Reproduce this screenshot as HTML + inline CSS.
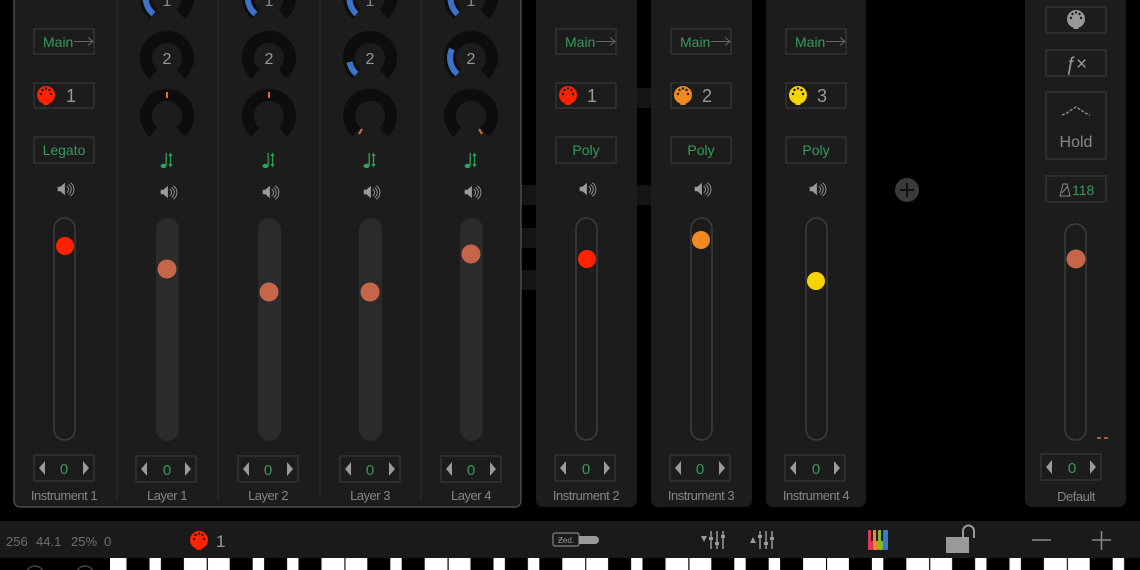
<!DOCTYPE html>
<html><head><meta charset="utf-8"><style>
html,body{margin:0;padding:0;background:#000;width:1140px;height:570px;overflow:hidden}
svg{display:block}
text{font-family:"Liberation Sans",sans-serif}
</style></head><body>
<svg width="1140" height="570" viewBox="0 0 1140 570" xmlns="http://www.w3.org/2000/svg">
<defs>
<g id="ring"><path d="M-13.5,16 A21,21 0 1 1 13.5,16" fill="none" stroke="#0d0d0d" stroke-width="12"/></g>
<g id="spk" fill="#9a9a9a" transform="scale(0.9)"><path d="M-7,-2.5 h3 l5,-4.5 v14 l-5,-4.5 h-3z"/><path d="M3,-3 a4,4 0 0 1 0,7" fill="none" stroke="#9a9a9a" stroke-width="1"/><path d="M5,-5 a6.5,6.5 0 0 1 0,11" fill="none" stroke="#9a9a9a" stroke-width="1"/><path d="M7,-7 a9,9 0 0 1 0,15" fill="none" stroke="#9a9a9a" stroke-width="1"/></g>
<g id="midi"><circle r="9"/><rect x="-2.5" y="6" width="5" height="4"/><g fill="#1b1b1b"><circle cx="-5" cy="-1" r="1.2"/><circle cx="-3.5" cy="-5" r="1.2"/><circle cx="0" cy="-6.5" r="1.2"/><circle cx="3.5" cy="-5" r="1.2"/><circle cx="5" cy="-1" r="1.2"/></g></g>
<g id="note" fill="#2fa356" stroke="#2fa356"><ellipse cx="-3.5" cy="6" rx="3" ry="2.2" stroke="none"/><line x1="-0.8" y1="6" x2="-0.8" y2="-7" stroke-width="1.3"/><line x1="3.5" y1="-6" x2="3.5" y2="6" stroke-width="1.3"/><path d="M1.5,-4 L3.5,-7.5 L5.5,-4z M1.5,4 L3.5,7.5 L5.5,4z" stroke="none"/></g>
<g id="val"><rect x="-30" y="-13" width="60" height="26" fill="none" stroke="#333" stroke-width="1.5"/><path d="M-19,-7 v14 l-6,-7z M19,-7 v14 l6,-7z" fill="#9a9a9a"/></g>
<pattern id="keys" patternUnits="userSpaceOnUse" x="103.6" y="558" width="240.8" height="12">
<rect width="240.8" height="12" fill="#fff"/>
<g stroke="#000" stroke-width="1.2"><line x1="0.5" y1="0" x2="0.5" y2="12"/><line x1="103.7" y1="0" x2="103.7" y2="12"/></g>
<g fill="#000"><rect x="22.9" width="23" height="12"/><rect x="57.3" width="23" height="12"/><rect x="126.1" width="23" height="12"/><rect x="160.5" width="23" height="12"/><rect x="194.9" width="23" height="12"/></g>
</pattern>
</defs>

<g fill="#151515"><rect x="521" y="185" width="16" height="20"/><rect x="521" y="228" width="16" height="20"/><rect x="521" y="270" width="16" height="20"/><rect x="637" y="88" width="15" height="20"/><rect x="637" y="185" width="15" height="20"/></g>

<rect x="14" y="-10" width="507" height="517" rx="6" fill="#1c1c1c" stroke="#5a5a5a" stroke-width="1.2"/>
<g stroke="#2e2e2e" stroke-width="1"><line x1="117" y1="0" x2="117" y2="500"/><line x1="218" y1="0" x2="218" y2="500"/><line x1="320" y1="0" x2="320" y2="500"/><line x1="421" y1="0" x2="421" y2="500"/></g>
<g fill="#1c1c1c"><rect x="536" y="-10" width="101" height="517" rx="7"/><rect x="651" y="-10" width="101" height="517" rx="7"/><rect x="766" y="-10" width="100" height="517" rx="7"/><rect x="1025" y="-10" width="101" height="517" rx="7"/></g>

<g font-size="14" fill="#379a58">
<g stroke="#333" stroke-width="1.5" fill="none">
<rect x="34" y="29" width="60" height="25"/><rect x="34" y="83" width="60" height="25"/><rect x="34" y="137" width="60" height="26"/>
<rect x="556" y="29" width="60" height="25"/><rect x="556" y="83" width="60" height="25"/><rect x="556" y="137" width="60" height="26"/>
<rect x="671" y="29" width="60" height="25"/><rect x="671" y="83" width="60" height="25"/><rect x="671" y="137" width="60" height="26"/>
<rect x="786" y="29" width="60" height="25"/><rect x="786" y="83" width="60" height="25"/><rect x="786" y="137" width="60" height="26"/>
</g>
<text x="43" y="47">Main</text><text x="565" y="47">Main</text><text x="680" y="47">Main</text><text x="795" y="47">Main</text>
<text x="64" y="155" text-anchor="middle">Legato</text><text x="586" y="155" text-anchor="middle">Poly</text><text x="701" y="155" text-anchor="middle">Poly</text><text x="816" y="155" text-anchor="middle">Poly</text>
</g>
<g stroke="#666" stroke-width="1" fill="none"><path d="M74,41.5 h19 M88,37.5 l5,4 l-5,4"/><path d="M596,41.5 h19 M610,37.5 l5,4 l-5,4"/><path d="M711,41.5 h19 M725,37.5 l5,4 l-5,4"/><path d="M826,41.5 h19 M840,37.5 l5,4 l-5,4"/></g>
<use href="#midi" x="46" y="95" fill="#ff2200"/><use href="#midi" x="568" y="95" fill="#ff2200"/><use href="#midi" x="683" y="95" fill="#f08a1c"/><use href="#midi" x="798" y="95" fill="#f5d400"/>
<g font-size="18" fill="#999"><text x="66" y="102">1</text><text x="587" y="102">1</text><text x="702" y="102">2</text><text x="817" y="102">3</text></g>

<g transform="translate(167,0)"><use href="#ring" y="-2"/><path d="M-13.5,14 A21,21 0 0 1 -19,-12" fill="none" stroke="#3b73c8" stroke-width="6"/><text x="0" y="6" font-size="16" fill="#888" text-anchor="middle">1</text>
<use href="#ring" y="58"/><text x="0" y="64" font-size="16" fill="#999" text-anchor="middle">2</text>
<use href="#ring" y="116"/><rect x="-1" y="92" width="2" height="6" fill="#e0693e"/><use href="#note" y="160"/><use href="#spk" y="192"/></g>
<g transform="translate(269,0)"><use href="#ring" y="-2"/><path d="M-13.5,14 A21,21 0 0 1 -19,-12" fill="none" stroke="#3b73c8" stroke-width="6"/><text x="0" y="6" font-size="16" fill="#888" text-anchor="middle">1</text>
<use href="#ring" y="58"/><text x="0" y="64" font-size="16" fill="#999" text-anchor="middle">2</text>
<use href="#ring" y="116"/><rect x="-1" y="92" width="2" height="6" fill="#e0693e"/><use href="#note" y="160"/><use href="#spk" y="192"/></g>
<g transform="translate(370,0)"><use href="#ring" y="-2"/><path d="M-13.5,14 A21,21 0 0 1 -20,-6" fill="none" stroke="#3b73c8" stroke-width="6"/><text x="0" y="6" font-size="16" fill="#888" text-anchor="middle">1</text>
<use href="#ring" y="58"/><path d="M-13.5,74 A21,21 0 0 1 -20.5,62" fill="none" stroke="#3b73c8" stroke-width="6"/><text x="0" y="64" font-size="16" fill="#999" text-anchor="middle">2</text>
<use href="#ring" y="116"/><line x1="-8" y1="129" x2="-11" y2="134" stroke="#e0693e" stroke-width="2"/><use href="#note" y="160"/><use href="#spk" y="192"/></g>
<g transform="translate(471,0)"><use href="#ring" y="-2"/><path d="M-13.5,14 A21,21 0 0 1 -20,-6" fill="none" stroke="#3b73c8" stroke-width="6"/><text x="0" y="6" font-size="16" fill="#888" text-anchor="middle">1</text>
<use href="#ring" y="58"/><path d="M-13.5,74 A21,21 0 0 1 -19,49" fill="none" stroke="#3b73c8" stroke-width="6"/><text x="0" y="64" font-size="16" fill="#999" text-anchor="middle">2</text>
<use href="#ring" y="116"/><line x1="8" y1="129" x2="11" y2="134" stroke="#e0693e" stroke-width="2"/><use href="#note" y="160"/><use href="#spk" y="192"/></g>
<use href="#spk" x="64" y="189"/><use href="#spk" x="586" y="189"/><use href="#spk" x="701" y="189"/><use href="#spk" x="816" y="189"/>

<g fill="none" stroke="#3d3d3d" stroke-width="1.5"><rect x="54" y="218" width="21" height="222" rx="10.5"/><rect x="576" y="218" width="21" height="222" rx="10.5"/><rect x="691" y="218" width="21" height="222" rx="10.5"/><rect x="806" y="218" width="21" height="222" rx="10.5"/><rect x="1065" y="224" width="21" height="216" rx="10.5"/></g>
<g fill="#2b2b2b"><rect x="156" y="218" width="23" height="223" rx="11.5"/><rect x="258" y="218" width="23" height="223" rx="11.5"/><rect x="359" y="218" width="23" height="223" rx="11.5"/><rect x="460" y="218" width="23" height="223" rx="11.5"/></g>
<circle cx="65" cy="246" r="9" fill="#ff2200"/><circle cx="587" cy="259" r="9" fill="#ff2200"/><circle cx="701" cy="240" r="9" fill="#f08a1c"/><circle cx="816" cy="281" r="9" fill="#f5d400"/>
<g fill="#c5654a"><circle cx="167" cy="269" r="9.5"/><circle cx="269" cy="292" r="9.5"/><circle cx="370" cy="292" r="9.5"/><circle cx="471" cy="254" r="9.5"/><circle cx="1076" cy="259" r="9.5"/></g>

<use href="#val" x="64" y="468"/><use href="#val" x="166" y="469"/><use href="#val" x="268" y="469"/><use href="#val" x="370" y="469"/><use href="#val" x="471" y="469"/><use href="#val" x="585" y="468"/><use href="#val" x="700" y="468"/><use href="#val" x="815" y="468"/><use href="#val" x="1071" y="467"/>
<g font-size="15" fill="#379a58" text-anchor="middle"><text x="64" y="474">0</text><text x="167" y="475">0</text><text x="268" y="475">0</text><text x="370" y="475">0</text><text x="471" y="475">0</text><text x="586" y="474">0</text><text x="700" y="474">0</text><text x="816" y="474">0</text><text x="1072" y="473">0</text></g>
<g font-size="13" fill="#858585" text-anchor="middle" letter-spacing="-0.5"><text x="64" y="500">Instrument 1</text><text x="167" y="500">Layer 1</text><text x="268" y="500">Layer 2</text><text x="370" y="500">Layer 3</text><text x="471" y="500">Layer 4</text><text x="586" y="500">Instrument 2</text><text x="701" y="500">Instrument 3</text><text x="816" y="500">Instrument 4</text><text x="1076" y="501">Default</text></g>

<circle cx="907" cy="190" r="12" fill="#3a3a3a"/><path d="M900,190 h14 M907,183 v14" stroke="#111" stroke-width="2"/>

<g stroke="#333" stroke-width="1.5" fill="none"><rect x="1046" y="7" width="60" height="26"/><rect x="1046" y="50" width="60" height="26"/><rect x="1046" y="92" width="60" height="67"/><rect x="1046" y="176" width="60" height="26"/></g>
<use href="#midi" x="1076" y="19" fill="#999"/>
<text x="1076" y="70" font-size="19" fill="#999" text-anchor="middle" font-style="italic" font-family="Liberation Serif,serif">ƒ×</text>
<path d="M1062,115 l5,-2 l4,-3 l5,-3 l5,3 l4,3 l5,2" fill="none" stroke="#888" stroke-width="1.5" stroke-dasharray="3,1.5"/>
<text x="1076" y="147" font-size="16" fill="#888" text-anchor="middle">Hold</text>
<path d="M1060,196 l3,-12 h4 l3,12z M1062,193 l6,-7" fill="none" stroke="#888" stroke-width="1"/>
<text x="1072" y="195" font-size="14" fill="#379a58">118</text>
<path d="M1097,438 h4 M1104,438 h4" stroke="#e0693e" stroke-width="1.5"/>

<rect x="0" y="521" width="1140" height="37" fill="#1a1a1a"/>
<g font-size="13" fill="#6f6f6f"><text x="6" y="546">256</text><text x="36" y="546">44.1</text><text x="71" y="546">25%</text><text x="104" y="546">0</text></g>
<use href="#midi" x="199" y="540" fill="#ff2200"/>
<text x="216" y="547" font-size="17" fill="#999">1</text>
<rect x="553" y="533" width="26" height="13" rx="2" fill="none" stroke="#999" stroke-width="1"/><text x="566" y="543" font-size="8" fill="#999" text-anchor="middle">Ƶed.</text>
<path d="M579,536 h16 a4,4 0 0 1 0,8 h-16z" fill="#999"/>
<g fill="#999" stroke="#999"><path d="M701,536 h6 l-3,6z" stroke="none"/><line x1="711" y1="531" x2="711" y2="549" stroke-width="1.5"/><line x1="717" y1="531" x2="717" y2="549" stroke-width="1.5"/><line x1="723" y1="531" x2="723" y2="549" stroke-width="1.5"/><rect x="709" y="537" width="4" height="3" stroke="none"/><rect x="715" y="542" width="4" height="3" stroke="none"/><rect x="721" y="535" width="4" height="3" stroke="none"/>
<path d="M750,543 h6 l-3,-6z" stroke="none"/><line x1="760" y1="531" x2="760" y2="549" stroke-width="1.5"/><line x1="766" y1="531" x2="766" y2="549" stroke-width="1.5"/><line x1="772" y1="531" x2="772" y2="549" stroke-width="1.5"/><rect x="758" y="535" width="4" height="3" stroke="none"/><rect x="764" y="542" width="4" height="3" stroke="none"/><rect x="770" y="537" width="4" height="3" stroke="none"/></g>
<g><rect x="868" y="530" width="5" height="20" rx="1" fill="#e0365a"/><rect x="873" y="530" width="5" height="20" rx="1" fill="#f08a1c"/><rect x="878" y="530" width="5" height="20" rx="1" fill="#86b82e"/><rect x="883" y="530" width="5" height="20" rx="1" fill="#3a78d0"/><g fill="#1a1a1a"><rect x="871" y="530" width="2" height="11"/><rect x="876" y="530" width="2" height="11"/><rect x="881" y="530" width="2" height="11"/></g></g>
<rect x="946" y="537" width="23" height="16" fill="#999"/><path d="M963,537 v-6 a5.5,5.5 0 0 1 11,0 v7" fill="none" stroke="#999" stroke-width="2"/>
<path d="M1032,540 h19 M1092,540 h19 M1101.5,531 v19" stroke="#888" stroke-width="1.5"/>
<circle cx="35" cy="575" r="9" fill="none" stroke="#444" stroke-width="1.5"/><circle cx="85" cy="575" r="9" fill="none" stroke="#444" stroke-width="1.5"/>

<rect x="110" y="558" width="1030" height="12" fill="url(#keys)"/>
</svg>
</body></html>
